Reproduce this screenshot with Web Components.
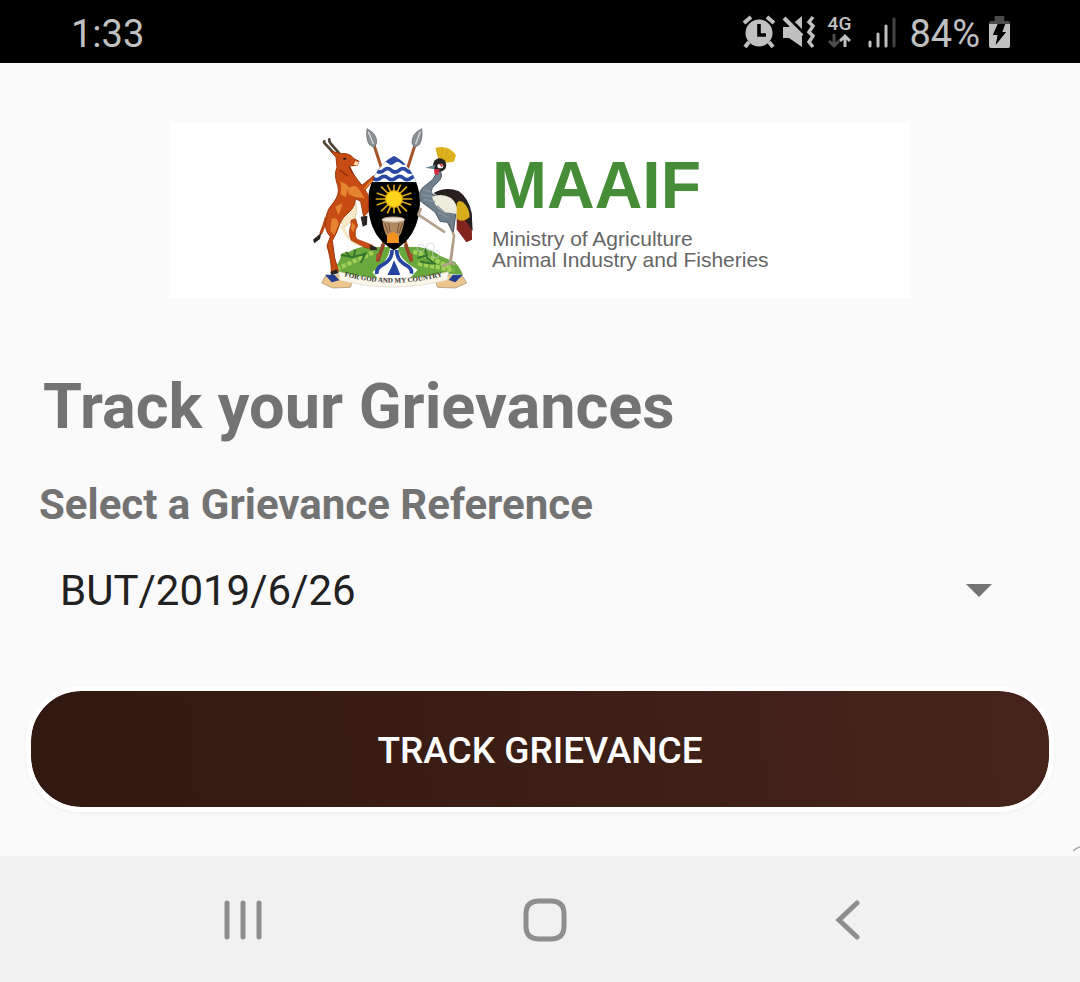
<!DOCTYPE html>
<html lang="en">
<head>
<meta charset="utf-8">
<meta name="viewport" content="width=device-width, initial-scale=1">
<title>Track your Grievances</title>
<style>
  body { margin: 0; font-family: Roboto, sans-serif; background: #fafafa; }
</style>
</head>
<body>
<track-app></track-app>

<script>
class BaseElement extends HTMLElement {
  constructor() {
    super();
    this.attachShadow({ mode: "open" }).innerHTML = this.constructor.markup;
  }
}

customElements.define("status-bar", class extends BaseElement {
  static markup = `
    <style>
      :host { display: flex; align-items: center; justify-content: space-between; box-sizing: border-box;
        height: 63px; padding: 4px 70px 0 71px; background: #000; color: #c0c0c0; font-size: 38px; line-height: 48px; }
      .right { display: flex; align-items: center; }
      .net { display: flex; flex-direction: column; align-items: center; width: 28px; margin: 0 14px 0 9px; }
      .net span { font-size: 19px; line-height: 18px; font-weight: 500; }
      svg { display: block; }
      .right > svg, .net { padding-bottom: 4px; }
      .level { margin: 0 9px 0 13px; }
    </style>
    <time>1:33</time>
    <div class="right">
      <svg width="74" height="34" viewBox="0 0 74 34" fill="#c0c0c0" aria-label="Alarm on, sound off">
        <circle cx="17" cy="18" r="13.500"/>
        <path d="M2 8 9 2M25 2l7 6M7 27l-4 5M27 27l4 5" stroke="#c0c0c0" stroke-width="4" fill="none"/>
        <path d="M17 9v11h7" stroke="#000" stroke-width="3.600" fill="none"/>
        <path d="M41 12h6l13-11v31L47 23h-6z"/>
        <path d="M43 0 62 19" stroke="#000" stroke-width="4"/>
        <path d="M42 3 60 21" stroke="#c0c0c0" stroke-width="4"/>
        <path d="m71 2-4 5 4 4-4 6 4 4-4 6 4 5" fill="none" stroke="#c0c0c0" stroke-width="3.500"/>
      </svg>
      <div class="net">
        <span>4G</span>
        <svg width="24" height="16" viewBox="0 0 24 16" fill="none" stroke-width="3">
          <path d="M7 1v12M2 8l5 5 5-5" stroke="#4b4b4b"/>
          <path d="M18 14V3M13 8l5-5 5 5" stroke="#c0c0c0"/>
        </svg>
      </div>
      <svg width="29" height="32" viewBox="0 0 29 32" stroke="#c0c0c0" stroke-width="3" stroke-linecap="round" aria-label="Signal">
        <path d="M3 26v4M11 18v12M19 10v20"/><path d="M27 3v27" stroke="#444"/>
      </svg>
      <span class="level">84%</span>
      <svg width="21" height="34" viewBox="0 0 22 34" preserveAspectRatio="none" aria-label="Charging">
        <path d="M0 10V8q0-2 2-2h4V1h10v5h4q2 0 2 2v4z" fill="#4b4b4b"/>
        <path d="M0 9h22v22q0 2-2 2H2q-2 0-2-2z" fill="#c0c0c0"/>
        <path d="M9 9h8l-3 8h4L7 30l2-10H4z" fill="#000"/>
      </svg>
    </div>`;
});

customElements.define("coat-of-arms", class extends BaseElement {
  static markup = `
    <style>:host { display: block; width: 180px; } svg { display: block; width: 100%; }</style>
    <svg viewBox="0 0 540 540" role="img" aria-label="Coat of arms of Uganda">
      <defs><clipPath id="shield"><path d="M267 108C315 132 343 190 345 240C345 310 320 362 267 391C212 362 189 310 189 240C191 190 219 132 267 108Z"/></clipPath></defs>
      <!-- spears -->
      <g stroke="#a65328" stroke-width="9"><path d="M207 75 320 425M330 75 218 425"/></g>
      <g fill="#8b9092" stroke="#5e6466" stroke-width="2">
        <path d="M186 26q31 15 29 43l-7 15-16-11q-10-20-6-47zM350 26q-31 15-29 43l7 15 16-11q10-20 6-47z"/>
      </g>
      <path d="M190 35 205 72M346 35 332 72" stroke="#d6dadb" stroke-width="4"/>
      <!-- mound -->
      <path d="M78 456Q100 435 107 412 105 395 130 397 165 375 207 381H342Q376 386 406 408L450 426Q466 444 474 464L410 460Q264 502 105 461Z" fill="#69a83c"/>
      <path d="M94 448Q150 422 205 397M325 396Q360 402 437 444M339 431 447 451" stroke="#a2cf55" stroke-width="13" stroke-dasharray="13 5" fill="none"/>
      <path d="M108 405 143 412 180 401M123 396l14 17M151 389l-5 24M167 428l17-31M337 414l33-9M360 385l6 28 25 20M345 425l39 6" stroke="#35752e" stroke-width="6" fill="none"/>
      <g fill="none" stroke="#cfcfcf" stroke-width="2"><circle cx="348" cy="384" r="11"/><circle cx="376" cy="381" r="12"/><circle cx="393" cy="402" r="11"/></g>
      <path d="M218 424 235 373M320 424 301 373" stroke="#934627" stroke-width="11"/>
      <path d="m214 401 16 4-16 23zM310 405l13-5 0 28z" fill="#aa4b28"/>
      <!-- river -->
      <path d="M255 384H280Q280 418 338 449L310 480H222L202 456Q252 424 255 384Z" fill="#fff"/>
      <path d="M261 390Q262 418 235 433 212 445 216 462M275 390Q275 418 299 433 323 445 319 461" fill="none" stroke="#2444a0" stroke-width="11"/>
      <path d="M267 421 278 445 286 465H247L258 444Z" fill="#2444a0"/>
      <!-- shield -->
      <g clip-path="url(#shield)">
        <path d="M180 100h170v300H180z" fill="#000"/><path d="M180 100h170v86H180z" fill="#fff"/>
        <path d="M230 130q10-10 19 0t19 0 19 0 19 0l0-30h-76z" fill="#2848a4"/>
        <path d="M190 151q12-10 23 0t23 0 23 0 23 0 23 0 23 0 23 0M180 174q12-10 23 0t23 0 23 0 23 0 23 0 23 0 23 0" fill="none" stroke="#2848a4" stroke-width="11"/>
        <g stroke="#dba916" stroke-width="5">
          <path d="M267 194v86M212 237h110M228 200l78 74M306 200l-78 74M247 194l40 86M287 194l-40 86M215 219l104 36M319 219l-104 36"/>
        </g>
        <circle cx="267" cy="237" r="25" fill="#ffd619" stroke="#e7aa0d" stroke-width="4"/>
        <path d="M232 299h66q-4 35-16 50v20h-36v-20q-11-18-14-50z" fill="#b28a61"/>
        <path d="M247 344 265 335 281 346V369H246V352Z" fill="#f39220"/>
        <path d="M240 309 249 339M251 309 255 335M282 309 277 339M292 309 283 339" stroke="#765039" stroke-width="3"/>
        <ellipse cx="265" cy="299" rx="34" ry="8" fill="#eee4d3" stroke="#b9a58a" stroke-width="3"/>
      </g>
      <!-- kob -->
      <path d="M88 101 60 71q-5-6-2-7M103 100 78 72q-7-9-5-14" fill="none" stroke="#4d4435" stroke-width="8" stroke-linecap="round"/>
      <path d="M64 293Q56 321 47 342" stroke="#b84512" stroke-width="9" fill="none"/>
      <path d="M49 338 24 359 28 370 45 357Z" fill="#24231f"/>
      <path d="M150 240Q162 270 146 300L118 322 104 300Z" fill="#f7e8c8" stroke="#d8bd91" stroke-width="2"/>
      <path d="M113 310Q126 343 143 362L190 371 184 381 150 376Q124 356 104 320Z" fill="#f7e8c8"/>
      <path d="M93 112 77 93 108 101Q134 98 147 116L162 124 157 136 133 138Q142 160 158 180L171 196 206 167 204 182 180 210Q192 224 190 246L190 276 176 290 167 244 151 236Q150 262 132 276 112 292 104 312 98 334 82 362L89 414 101 455 79 458Q80 425 66 377L76 350Q56 330 63 290 68 266 86 247 106 222 98 196 86 164 96 142Z" fill="#c74c13" stroke="#9e350b" stroke-width="3"/>
      <path d="M152 296 158 318Q145 336 155 357L203 376 210 389 181 383 139 361Q128 339 138 314L138 301Z" fill="#c74c13" stroke="#9e350b" stroke-width="2"/>
      <path d="M105 184Q124 190 132 202L121 232 106 222Q111 204 105 184ZM130 203Q154 190 164 211L179 235 151 231 130 222ZM91 260 112 250 106 274 99 284ZM80 296Q98 291 101 313L88 345 76 333ZM141 306 151 318 145 336 138 327Z" fill="#e58430"/>
      <path d="M178 207 202 180" stroke="#e58430" stroke-width="5"/>
      <path d="M132 139 144 162M104 150 128 168" stroke="#8d2908" stroke-width="4"/>
      <path d="m167 290 20-3-1 27-13 6zM193 375l20 6 4 9-21 1zM76 456l18-8 7 11-22 7z" fill="#292723"/>
      <ellipse cx="119" cy="116" rx="5" ry="3" fill="#26170f"/><path d="m151 123 11 4-6 10-10-3z" fill="#ffdab0"/>
      <!-- crane -->
      <path d="M348 264 340 284 420 337M432 306 447 347 438 420M447 347 435 430 412 438M435 425 450 435" fill="none" stroke="#b4a08d" stroke-width="8" stroke-linejoin="round"/>
      <path d="M455 252 500 281 501 359 484 367 455 328Z" fill="#82251c"/>
      <path d="M386 219Q422 198 462 214 490 234 500 278L503 333 476 294 454 266Z" fill="#26211f"/>
      <path d="M401 148Q420 168 397 188 372 207 382 223 424 231 453 277L445 336 427 307 405 304 390 276 346 243Q339 219 351 205L383 179Z" fill="#71808b" stroke="#4b5863" stroke-width="3"/>
      <path d="M381 230Q410 218 438 234 455 247 462 283L434 278Q397 279 381 230Z" fill="#eeecdd"/>
      <path d="M455 252Q459 237 474 247 493 263 494 291 473 310 455 296Z" fill="#d7ae19"/>
      <path d="M354 208 380 217M352 225 380 229M356 238 390 246M397 257 420 279M400 276 431 294" stroke="#8794a0" stroke-width="4"/>
      <path d="M401 119 391 84Q430 73 453 106L447 125 423 128Z" fill="#ddb31d"/>
      <path d="M402 120 396 87M409 120 412 83M414 121 430 88M418 122 446 101" stroke="#c4981b" stroke-width="2"/>
      <circle cx="404" cy="135" r="20" fill="#242422"/><path d="M391 134 361 143 387 148Z" fill="#66858d"/>
      <ellipse cx="406" cy="138" rx="9" ry="7" fill="#fff"/><path d="m402 131 13 3-5 8zM387 148h17l-5 17-11-4z" fill="#d6293d"/>
      <!-- ribbon -->
      <path d="M60 470 50 489 83 504 136 502 143 483 104 464ZM474 470 485 489 451 504 398 502 391 483 430 464Z" fill="#edc58c" stroke="#a18866" stroke-width="2"/>
      <path d="M60 464 80 487 103 481 88 464ZM474 464 451 487 431 480 444 464Z" fill="#243f90"/>
      <path d="M101 455Q260 499 430 455L427 480Q264 523 105 481Z" fill="#faf6ea" stroke="#ded8c9" stroke-width="2"/>
      <path id="motto" d="M118 469Q265 507 413 469" fill="none"/>
      <text font-family="Liberation Serif, serif" font-weight="700" font-size="21" fill="#34332f"><textPath href="#motto">FOR GOD AND MY COUNTRY</textPath></text>
    </svg>`;
});

customElements.define("ministry-banner", class extends BaseElement {
  static markup = `
    <style>
      :host { display: flex; align-items: flex-start; box-sizing: border-box; width: 100%; max-width: 740px; height: 175px;
        margin: 0 auto; padding-left: 135px; overflow: hidden; background: #fff; font-family: "Liberation Sans", Arial, sans-serif; }
      coat-of-arms { flex: none; margin-top: -3px; }
      .words { padding: 23px 0 0 7px; white-space: nowrap; }
      strong { display: block; font-size: 66px; line-height: 78px; color: #468d38; }
      p { margin: 4px 0 0; font-size: 21px; line-height: 21px; color: #666; }
    </style>
    <coat-of-arms></coat-of-arms>
    <div class="words">
      <strong>MAAIF</strong>
      <p>Ministry of Agriculture<br>Animal Industry and Fisheries</p>
    </div>`;
});

customElements.define("reference-form", class extends BaseElement {
  static markup = `
    <style>
      :host { display: block; }
      form { display: flex; flex-direction: column; }
      label { padding-left: 13px; font-size: 42px; line-height: 50px; font-weight: 700; color: #737373; }
      .pick { display: grid; align-items: center; margin: 28px 0 64px; }
      .pick > * { grid-area: 1 / 1; }
      select { appearance: none; box-sizing: border-box; width: 100%; height: 64px; margin: 0; padding: 2px 80px 0 34px;
        border: 0; background: none; font: 400 42px/50px Roboto, sans-serif; color: #212121; }
      .pick svg { justify-self: end; margin-right: 62px; pointer-events: none; }
      button { height: 126px; padding: 4px 0 0; border: 5px solid #fff; border-radius: 55px; color: #fff;
        background: linear-gradient(85deg, #311811, #46241b) padding-box;
        box-shadow: 0 1px 3px rgba(0,0,0,.06); font: 500 37px/44px Roboto, sans-serif; text-transform: uppercase; }
    </style>
    <form>
      <label for="ref">Select a Grievance Reference</label>
      <div class="pick">
        <select id="ref"><option>BUT/2019/6/26</option></select>
        <svg width="26" height="13" viewBox="0 0 26 13"><path d="M0 0h26L13 13z" fill="#737373"/></svg>
      </div>
      <button type="button">Track Grievance</button>
    </form>`;
});

customElements.define("navigation-bar", class extends BaseElement {
  static markup = `
    <style>
      :host { display: flex; justify-content: center; box-sizing: border-box; height: 126px; padding: 2px 0 0 10px; background: #f1f1f1; }
      button { display: flex; align-items: center; justify-content: center; flex: 0 1 302px; border: 0; padding: 0; background: none; }
      svg { fill: none; stroke: #8e8e8e; stroke-width: 5; }
    </style>
    <button aria-label="Recent apps"><svg width="38" height="44" viewBox="0 0 38 44" stroke-linecap="round"><path d="M3 5v34M19 5v34M35 5v34"/></svg></button>
    <button aria-label="Home"><svg width="44" height="44" viewBox="0 0 44 44"><path d="M16 3h12q13 0 13 13v12q0 13-13 13H16Q3 41 3 28V16Q3 3 16 3Z"/></svg></button>
    <button aria-label="Back"><svg width="26" height="44" viewBox="0 0 26 44" stroke-linecap="round"><path d="M23 5 5 22l18 17"/></svg></button>`;
});

customElements.define("track-app", class extends BaseElement {
  static markup = `
    <style>
      :host { display: flex; flex-direction: column; min-height: 100vh; }
      main { position: relative; flex: 1; padding: 60px 26px 44px; overflow: hidden; }
      h1 { margin: 72px 0 36px; padding-left: 17px; font-size: 63px; line-height: 74px; font-weight: 700; color: #737373; }
      .handle { position: absolute; right: 0; bottom: 4px; }
    </style>
    <status-bar></status-bar>
    <main>
      <ministry-banner></ministry-banner>
      <h1>Track your Grievances</h1>
      <reference-form></reference-form>
      <svg class="handle" width="8" height="8" viewBox="0 0 8 8" fill="none" stroke="#aaa" stroke-width="1.500"><path d="M1 7q3-3 7-4"/></svg>
    </main>
    <navigation-bar></navigation-bar>`;
});
</script>
</body>
</html>
